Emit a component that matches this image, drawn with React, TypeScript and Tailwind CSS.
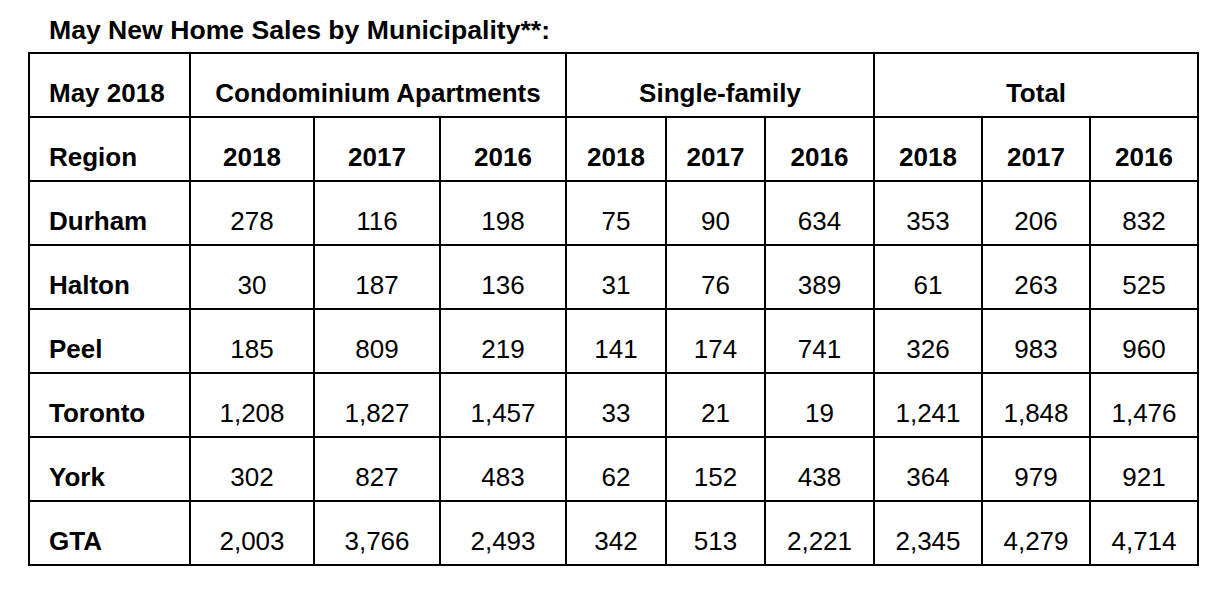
const years = ['2018', '2017', '2016'];

const rows: [string, string[]][] = [
  ['Durham', ['278', '116', '198', '75', '90', '634', '353', '206', '832']],
  ['Halton', ['30', '187', '136', '31', '76', '389', '61', '263', '525']],
  ['Peel', ['185', '809', '219', '141', '174', '741', '326', '983', '960']],
  ['Toronto', ['1,208', '1,827', '1,457', '33', '21', '19', '1,241', '1,848', '1,476']],
  ['York', ['302', '827', '483', '62', '152', '438', '364', '979', '921']],
  ['GTA', ['2,003', '3,766', '2,493', '342', '513', '2,221', '2,345', '4,279', '4,714']],
];

const colWidths = [161, 124, 126, 126, 100, 99, 109, 108, 108, 108];

export default function App() {
  const cell = 'h-[64px] border-r-2 border-b-2 border-black align-top pt-[24px] leading-[30px]';

  return (
    <div className="min-h-[590px] w-[1220px] bg-white text-black font-['Liberation_Sans',Arial,sans-serif]">
      <div className="pl-[49px] pt-[15px] text-[26.6px] font-bold leading-[30px]">
        May New Home Sales by Municipality**:
      </div>

      <table className="ml-[28px] mt-[7px] table-fixed border-separate border-spacing-0 border-l-2 border-t-2 border-black text-[26px]">
        <colgroup>
          {colWidths.map((w, i) => (
            <col key={i} style={{ width: w }} />
          ))}
        </colgroup>
        <thead>
          <tr>
            <th className={`${cell} pl-[19px] text-left font-bold`}>May 2018</th>
            <th colSpan={3} className={`${cell} text-center font-bold`}>Condominium Apartments</th>
            <th colSpan={3} className={`${cell} text-center font-bold`}>Single-family</th>
            <th colSpan={3} className={`${cell} text-center font-bold`}>Total</th>
          </tr>
          <tr>
            <th className={`${cell} pl-[19px] text-left font-bold`}>Region</th>
            {[0, 1, 2].flatMap((g) =>
              years.map((y) => (
                <th key={`${g}-${y}`} className={`${cell} text-center font-bold`}>
                  {y}
                </th>
              ))
            )}
          </tr>
        </thead>
        <tbody>
          {rows.map(([name, vals]) => (
            <tr key={name}>
              <td className={`${cell} pl-[19px] text-left font-bold`}>{name}</td>
              {vals.map((v, i) => (
                <td key={i} className={`${cell} text-center font-normal`}>
                  {v}
                </td>
              ))}
            </tr>
          ))}
        </tbody>
      </table>
    </div>
  );
}
